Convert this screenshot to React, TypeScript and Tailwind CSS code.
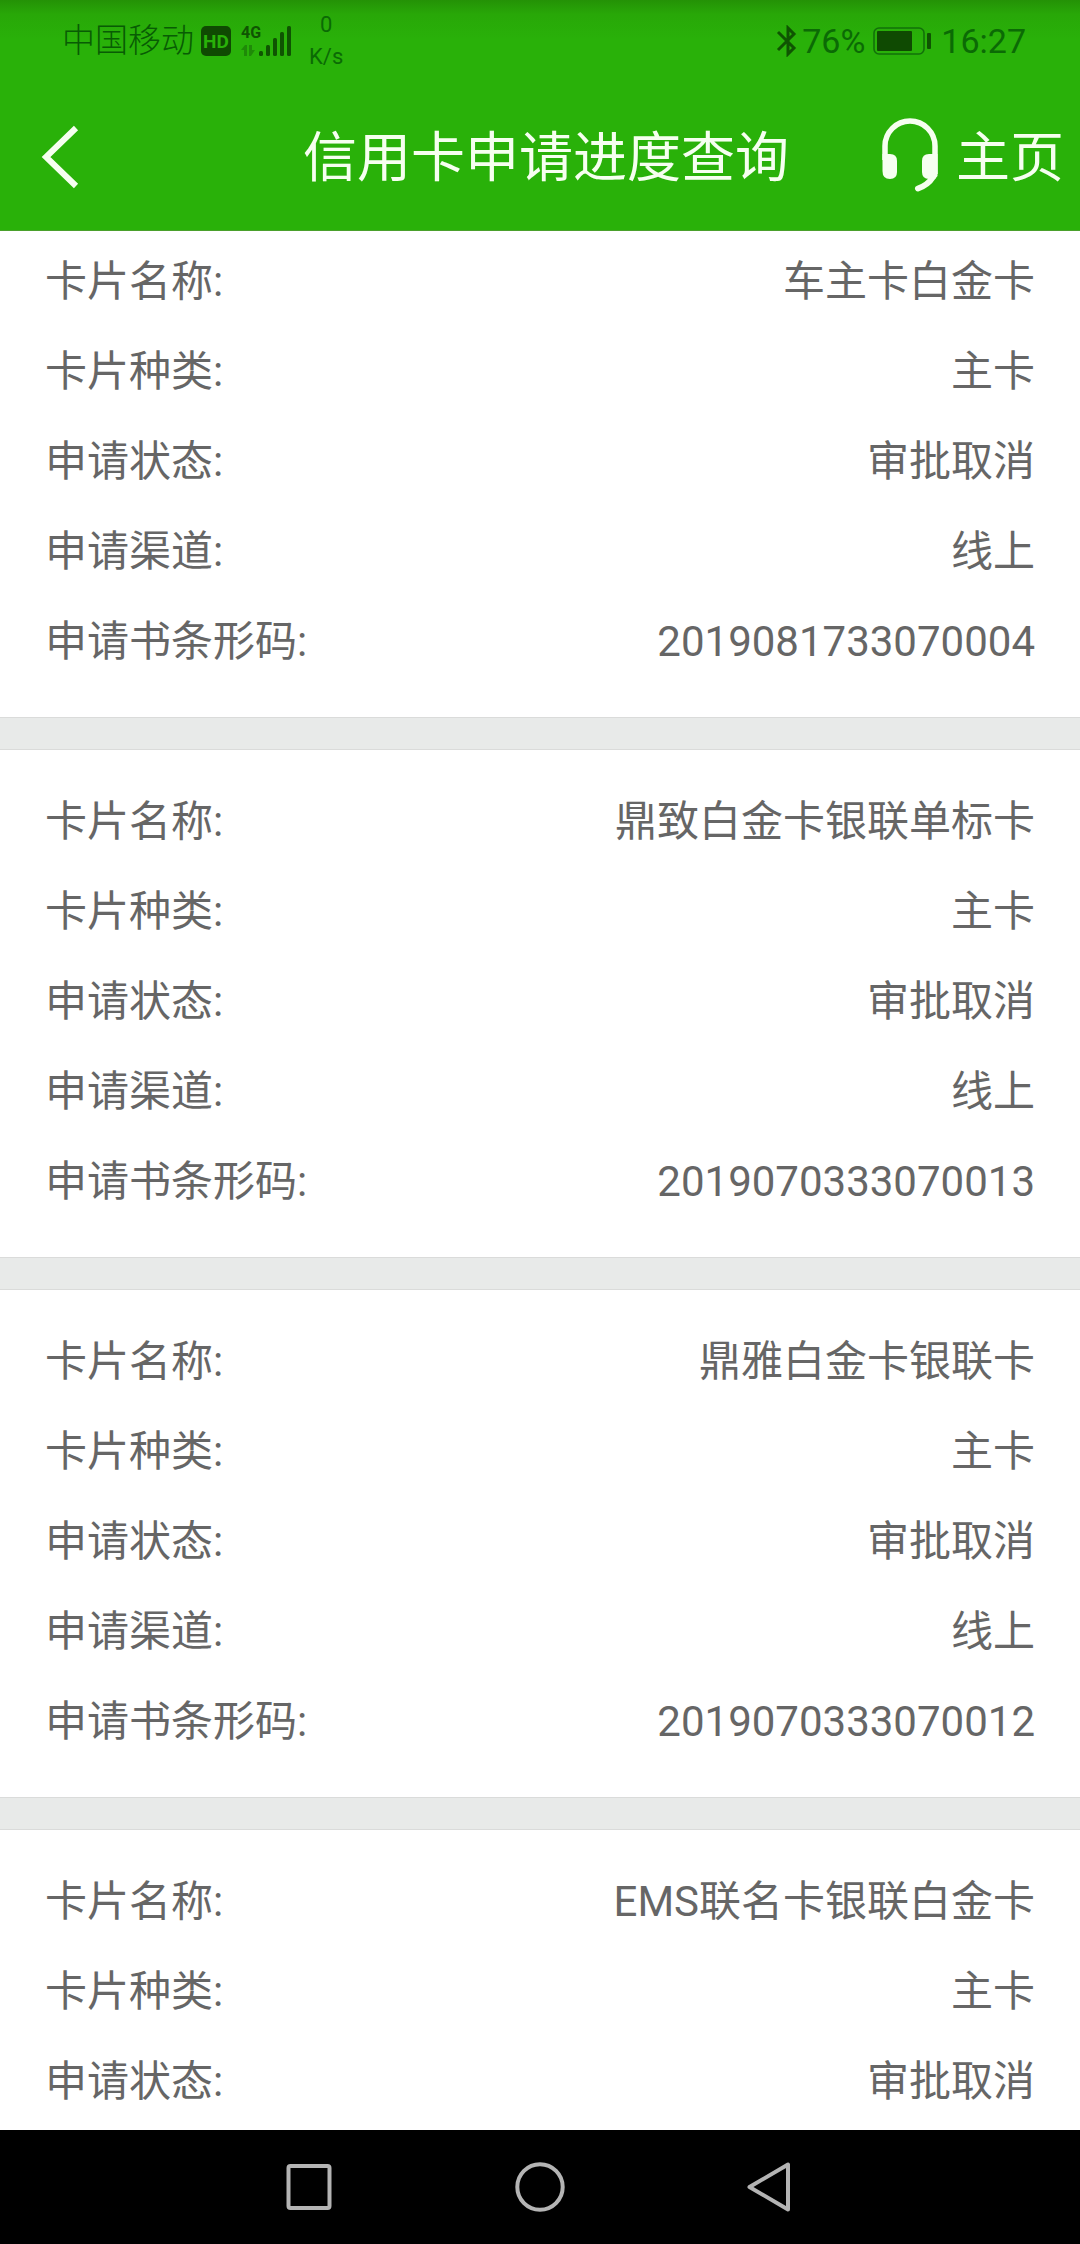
type Field = { label: string; value: string };

const cards: Field[][] = [
  [
    { label: "卡片名称:", value: "车主卡白金卡" },
    { label: "卡片种类:", value: "主卡" },
    { label: "申请状态:", value: "审批取消" },
    { label: "申请渠道:", value: "线上" },
    { label: "申请书条形码:", value: "2019081733070004" },
  ],
  [
    { label: "卡片名称:", value: "鼎致白金卡银联单标卡" },
    { label: "卡片种类:", value: "主卡" },
    { label: "申请状态:", value: "审批取消" },
    { label: "申请渠道:", value: "线上" },
    { label: "申请书条形码:", value: "2019070333070013" },
  ],
  [
    { label: "卡片名称:", value: "鼎雅白金卡银联卡" },
    { label: "卡片种类:", value: "主卡" },
    { label: "申请状态:", value: "审批取消" },
    { label: "申请渠道:", value: "线上" },
    { label: "申请书条形码:", value: "2019070333070012" },
  ],
  [
    { label: "卡片名称:", value: "EMS联名卡银联白金卡" },
    { label: "卡片种类:", value: "主卡" },
    { label: "申请状态:", value: "审批取消" },
  ],
];

function SignalIcon() {
  return (
    <svg width="34" height="32" viewBox="0 0 34 32" fill="#0f5402" aria-hidden="true">
      <rect x="0" y="26" width="4" height="5" rx="1.5" />
      <rect x="7" y="20" width="4" height="11" rx="1.5" />
      <rect x="14" y="13" width="4" height="18" rx="1.5" />
      <rect x="21" y="7" width="4" height="24" rx="1.5" />
      <rect x="28" y="1" width="4" height="30" rx="1.5" />
    </svg>
  );
}

function DataArrows() {
  return (
    <svg width="14" height="12" viewBox="0 0 14 12" fill="#1f8a08" aria-hidden="true">
      <path d="M0 5 L4 0 H6 V11 H3 V5 Z" />
      <path d="M8 0 H11 V5 H14 L10 11 H8 Z" />
    </svg>
  );
}

function BluetoothIcon() {
  return (
    <svg width="22" height="32" viewBox="0 0 22 32" fill="none" stroke="#0f5402" strokeWidth="3" aria-hidden="true">
      <path d="M2 7 L18 23 L12 29 V3 L18 9 L2 25" />
    </svg>
  );
}

function BatteryIcon() {
  return (
    <svg width="58" height="28" viewBox="0 0 58 28" aria-hidden="true">
      <rect x="1" y="1" width="50" height="26" rx="5" fill="none" stroke="#12700a" strokeWidth="1.6" />
      <rect x="4" y="4" width="35" height="20" rx="1" fill="#0f4a02" />
      <rect x="54" y="6" width="4" height="16" rx="1" fill="#0f5402" />
    </svg>
  );
}

function HeadsetIcon() {
  return (
    <svg width="56" height="74" viewBox="0 0 56 74" fill="none" stroke="#f6fff0" aria-hidden="true">
      <path d="M3 42 V28 A25 25 0 0 1 53 28 V56" strokeWidth="5.5" />
      <path d="M0.5 36 H8 Q15 36 15 43 V54 Q15 61 8 61 Q0.5 61 0.5 53 Z" fill="#f6fff0" stroke="none" />
      <path d="M55.5 36 H47 Q40 36 40 43 V54 Q40 61 47 61 H53 L55.5 58 Z" fill="#f6fff0" stroke="none" />
      <path d="M51 59 Q46 67 36 70.5" strokeWidth="6" strokeLinecap="round" />
    </svg>
  );
}

function Row({ label, value }: Field) {
  return (
    <div className="flex h-[90px] items-center justify-between px-[45px] text-[42px] leading-[60px] text-[#666666]">
      <dt>{label}</dt>
      <dd>{value}</dd>
    </div>
  );
}

export default function App() {
  return (
    <div className="flex h-screen flex-col overflow-hidden bg-white font-[Roboto,'Noto_Sans_CJK_SC',sans-serif]">
      <header className="border-b border-[#4aa02c] bg-[#29b109] bg-[linear-gradient(to_bottom,#249206_0,#28a708_14px,#29b109_40px)]">
        <div className="flex h-20 items-center justify-between pl-[62px] pr-[54px] pt-0.5 text-[34px] leading-10 text-[#0b6a05]">
          <div className="flex items-center">
            <span className="text-[33px] font-light text-[#085c04]">中国移动</span>
            <span className="ml-[7px] flex h-[30px] w-[30px] items-center justify-center rounded-[5px] bg-[#0f4a02] text-[19px] font-bold leading-none text-[#29b109]">
              HD
            </span>
            <div className="ml-2.5 flex items-end">
              <div className="flex h-8 w-[18px] flex-col items-start justify-between">
                <span className="text-[16px] font-bold leading-4 text-[#0f5402]">4G</span>
                <DataArrows />
              </div>
              <SignalIcon />
            </div>
            <div className="ml-4 flex flex-col items-center text-[22px] leading-8">
              <span>0</span>
              <span>K/s</span>
            </div>
          </div>
          <div className="flex items-center">
            <BluetoothIcon />
            <span className="ml-1">76%</span>
            <span className="ml-2">
              <BatteryIcon />
            </span>
            <span className="ml-2.5">16:27</span>
          </div>
        </div>
        <div className="grid h-[150px] grid-cols-[1fr_auto_1fr] items-center text-[54px] leading-[76px] text-[#f6fff0]">
          <button type="button" aria-label="返回" className="justify-self-start pl-10 pt-1">
            <svg width="42" height="64" viewBox="0 0 42 64" fill="none" stroke="#f6fff0" strokeWidth="6" aria-hidden="true">
              <path d="M36 3 L6 32 L36 61" />
            </svg>
          </button>
          <h1 className="pl-3 pt-2 font-normal">信用卡申请进度查询</h1>
          <div className="flex items-center justify-self-end pr-4">
            <button type="button" aria-label="客服">
              <HeadsetIcon />
            </button>
            <a href="#home" className="ml-[18px] pt-2 font-normal">
              主页
            </a>
          </div>
        </div>
      </header>

      <main className="flex-1 overflow-hidden">
        {cards.map((fields, i) => (
          <section key={i}>
            {i > 0 && <div className="h-[33px] border-y border-[#dadbda] bg-[#e8eae9]" />}
            <dl className={i === 0 ? "pb-[30px] pt-1.5" : i === cards.length - 1 ? "pt-[27px]" : "pb-[30px] pt-[27px]"}>
              {fields.map((f) => (
                <Row key={f.label} {...f} />
              ))}
            </dl>
          </section>
        ))}
      </main>

      <nav className="flex h-[114px] shrink-0 items-center justify-center gap-[181px] bg-black">
        <button type="button" aria-label="最近任务">
          <svg width="50" height="50" viewBox="0 0 50 50" fill="none" stroke="#b4b4b4" strokeWidth="4" aria-hidden="true">
            <rect x="4.5" y="4" width="41" height="42" rx="2" />
          </svg>
        </button>
        <button type="button" aria-label="主屏幕">
          <svg width="50" height="50" viewBox="0 0 50 50" fill="none" stroke="#b4b4b4" strokeWidth="4" aria-hidden="true">
            <circle cx="25" cy="25" r="22.7" />
          </svg>
        </button>
        <button type="button" aria-label="返回上一页">
          <svg width="50" height="50" viewBox="0 0 50 50" fill="none" stroke="#b4b4b4" strokeWidth="4" strokeLinejoin="round" aria-hidden="true">
            <path d="M42 2.5 V47.5 L3.5 25 Z" />
          </svg>
        </button>
      </nav>
    </div>
  );
}
